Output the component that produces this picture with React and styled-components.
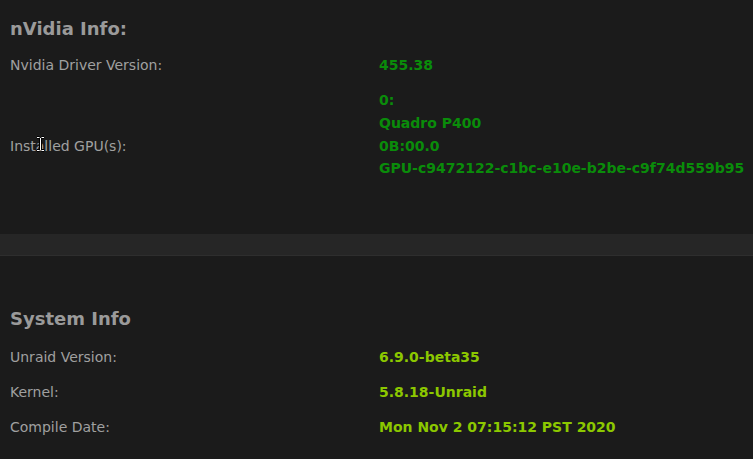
import styled, { createGlobalStyle } from "styled-components";

const GlobalStyle = createGlobalStyle`
  html, body {
    margin: 0;
    padding: 0;
    background: #1b1b1b;
  }
  body {
    font-family: "DejaVu Sans", "Liberation Sans", sans-serif;
  }
`;

const Page = styled.div`
  position: relative;
  width: 753px;
  height: 459px;
  overflow: hidden;
  background: #1b1b1b;
  display: flex;
  flex-direction: column;
`;

const Section = styled.section`
  flex: none;
  padding: ${(p) => p.$top}px 0 ${(p) => p.$bottom}px 10px;
`;

const Title = styled.h2`
  margin: 0 0 ${(p) => p.$gap}px;
  font-size: 18px;
  line-height: 25px;
  font-weight: 700;
  color: #9a9a9a;
`;

const InfoTable = styled.div`
  display: grid;
  grid-template-columns: 369px 1fr;
`;

const Label = styled.div`
  display: flex;
  align-items: center;
  padding: 6.15px 0;
  font-size: 14px;
  line-height: 22.7px;
  color: #a0a0a0;
`;

const Value = styled.div`
  padding: 6.15px 0;
  font-size: 14px;
  line-height: 22.7px;
  font-weight: 700;
  white-space: nowrap;
  color: ${(p) => p.$color};
  display: flex;
  flex-direction: column;
  justify-content: center;
`;

const Band = styled.div`
  flex: none;
  height: 21px;
  background: #262626;
  border-bottom: 1px solid #2e2e2e;
`;

const Cursor = styled.svg`
  position: absolute;
  left: 36px;
  top: 136px;
`;

const nvidiaGreen = "#0a8c0a";
const unraidLime = "#8cc800";

export default function App() {
  return (
    <Page>
      <GlobalStyle />
      <Section $top={16} $bottom={25.5}>
        <Title $gap={7}>nVidia Info:</Title>
        <InfoTable>
          <Label>Nvidia Driver Version:</Label>
          <Value $color={nvidiaGreen}>455.38</Value>
          <Label>Installed GPU(s):</Label>
          <Value $color={nvidiaGreen}>
            <span>0:</span>
            <span>Quadro P400</span>
            <span>0B:00.0</span>
            <span>GPU-c9472122-c1bc-e10e-b2be-c9f74d559b95</span>
            <span>&nbsp;</span>
          </Value>
        </InfoTable>
      </Section>
      <Band />
      <Section $top={50} $bottom={24}>
        <Title $gap={8.5}>System Info</Title>
        <InfoTable>
          <Label>Unraid Version:</Label>
          <Value $color={unraidLime}>6.9.0-beta35</Value>
          <Label>Kernel:</Label>
          <Value $color={unraidLime}>5.8.18-Unraid</Value>
          <Label>Compile Date:</Label>
          <Value $color={unraidLime}>Mon Nov 2 07:15:12 PST 2020</Value>
        </InfoTable>
      </Section>
      <Cursor width="9" height="16" viewBox="0 0 9 16">
        <path d="M1 1.5h2.5M5.5 1.5H8M4.5 2v12M1 14.5h2.5M5.5 14.5H8" stroke="#000" strokeWidth="3" />
        <path d="M1 1.5h2.5M5.5 1.5H8M4.5 2v12M1 14.5h2.5M5.5 14.5H8" stroke="#fff" strokeWidth="1" />
      </Cursor>
    </Page>
  );
}
